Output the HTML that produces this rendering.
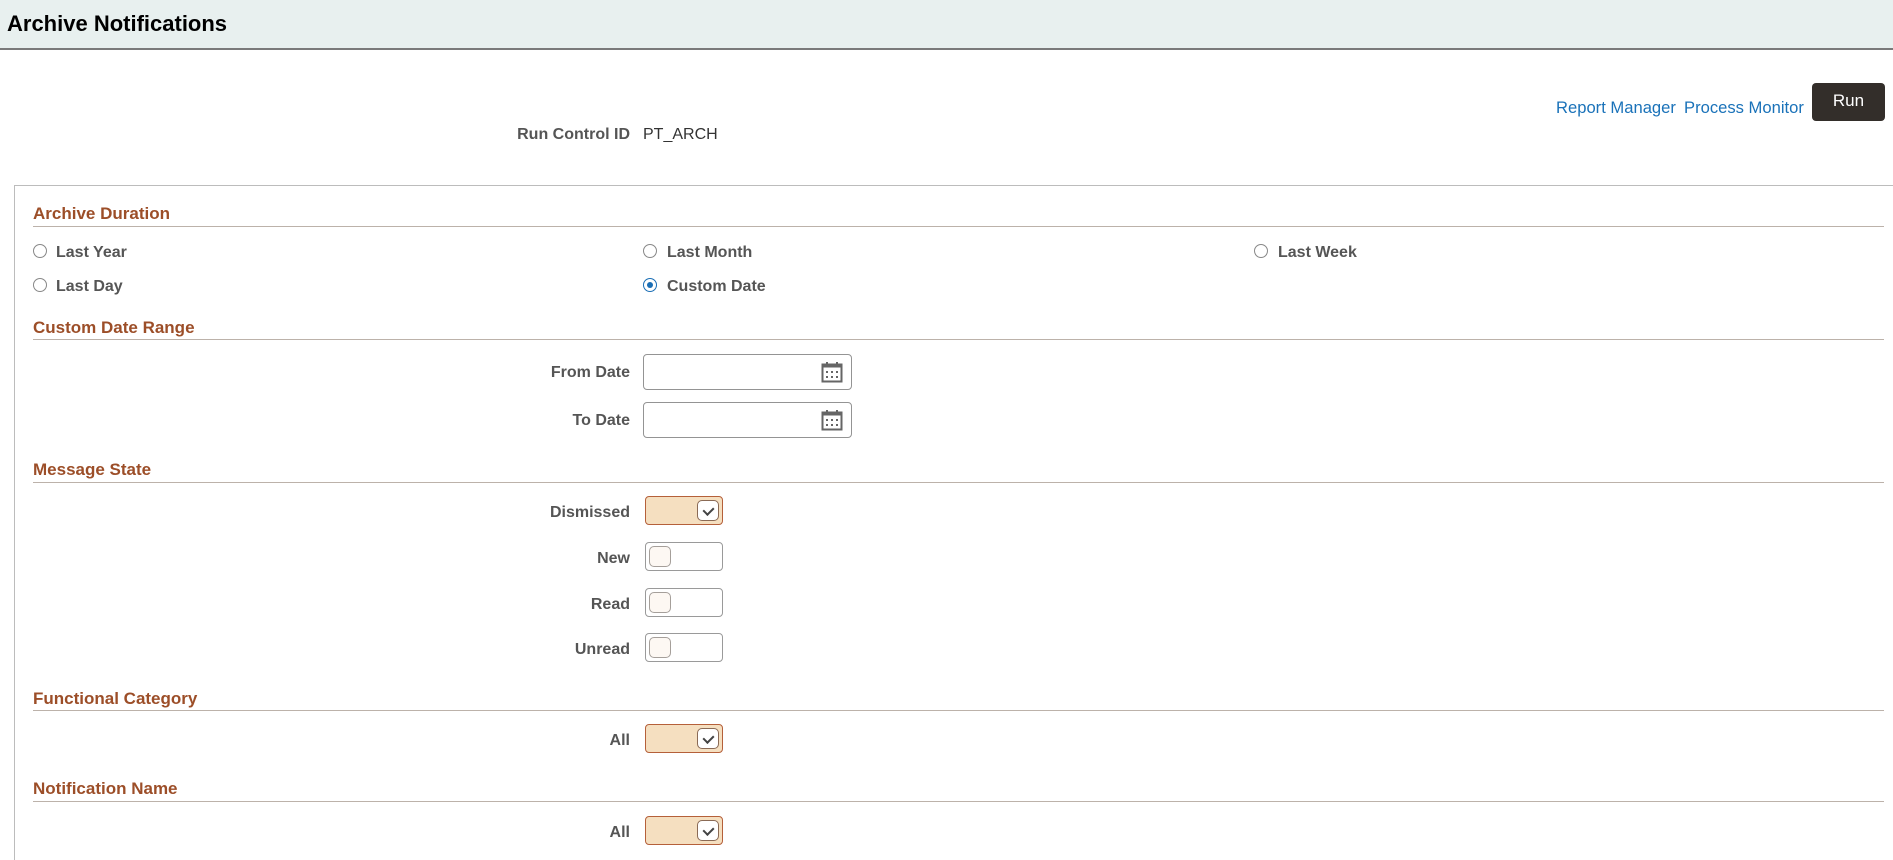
<!DOCTYPE html>
<html style="width:1893px;height:860px;overflow:hidden"><head><meta charset="utf-8"><style>
*{box-sizing:border-box;margin:0;padding:0}
body{width:1893px;height:860px;background:#fff;font-family:"Liberation Sans",Arial,sans-serif;position:relative;overflow:hidden;color:#333}
.hdr{position:absolute;left:0;top:0;width:1893px;height:50px;background:#e8f0ef;border-bottom:2px solid #7a7a7a}
.hdr h1{position:absolute;left:7px;top:11px;font-size:22px;font-weight:bold;color:#000}
.a{position:absolute;font-size:16.6px;color:#1a72b9;top:98px}
.run{position:absolute;left:1812px;top:83px;width:73px;height:38px;background:#332e2a;border-radius:4px;color:#fff;font-size:17px;text-align:center;line-height:36px}
.abs{position:absolute}
.lbl{position:absolute;font-size:16px;font-weight:bold;color:#555;text-align:right;width:300px;margin-top:1.5px}
.box{position:absolute;left:14px;top:185px;width:1900px;height:700px;border:1px solid #bcbcbc}
.h{position:absolute;left:33px;font-size:17px;font-weight:bold;color:#9c4e28;margin-top:1.5px}
.ln{position:absolute;left:33px;width:1851px;height:1px;background:#bcb2aa}
.rd{position:absolute;width:14px;height:14px;border:1.5px solid #888;border-radius:50%;background:#fff}
.rd.on{border-color:#1a6eb5}
.rd.on:after{content:"";position:absolute;left:2.5px;top:2.5px;width:6px;height:6px;border-radius:50%;background:#1a6eb5}
.rl{position:absolute;font-size:16px;font-weight:bold;color:#555;margin-top:1.5px}
.inp{position:absolute;left:643px;width:209px;height:36px;border:1px solid #949494;border-radius:4px;background:#fff}
.inp svg{position:absolute;right:8px;top:6px}
.tg{position:absolute;left:645px;width:78px;height:29px;border:1px solid #9a9a9a;border-radius:4px;background:#fff}
.tg .k{position:absolute;left:3px;top:3px;width:22px;height:21px;border:1px solid #a59f9a;border-radius:5px;background:#fdf8f3}
.tg.on{background:#f5dfc0;border-color:#b5603a}
.tg.on .k{left:auto;right:3px;background:#fff;border-color:#8a6a55}
.tg.on .k:after{content:"";position:absolute;left:7px;top:4px;width:5px;height:8px;border:solid #444;border-width:0 2px 2px 0;transform:rotate(45deg)}
</style></head><body>
<div class="hdr"><h1>Archive Notifications</h1></div>
<div class="a" style="left:1556px">Report Manager</div>
<div class="a" style="left:1684px">Process Monitor</div>
<div class="run">Run</div>
<div class="lbl" style="left:330px;top:124px">Run Control ID</div>
<div class="abs" style="left:643px;top:125.5px;font-size:16px;color:#333">PT_ARCH</div>
<div class="box"></div>

<div class="h" style="top:202px">Archive Duration</div><div class="ln" style="top:226px"></div>
<div class="rd" style="left:33px;top:244px"></div><div class="rl" style="left:56px;top:242px">Last Year</div>
<div class="rd" style="left:643px;top:244px"></div><div class="rl" style="left:667px;top:242px">Last Month</div>
<div class="rd" style="left:1254px;top:244px"></div><div class="rl" style="left:1278px;top:242px">Last Week</div>
<div class="rd" style="left:33px;top:278px"></div><div class="rl" style="left:56px;top:276px">Last Day</div>
<div class="rd on" style="left:643px;top:278px"></div><div class="rl" style="left:667px;top:276px">Custom Date</div>

<div class="h" style="top:316px">Custom Date Range</div><div class="ln" style="top:339px"></div>
<div class="lbl" style="left:330px;top:362px">From Date</div>
<div class="inp" style="top:354px"><svg width="22" height="22" viewBox="0 0 22 22"><rect x="1.5" y="3.5" width="19" height="17" fill="none" stroke="#666" stroke-width="2"/><rect x="1.5" y="3.5" width="19" height="3" fill="#666"/><path d="M6 1v4M16 1v4" stroke="#666" stroke-width="2"/><g fill="#666"><rect x="5" y="10" width="2" height="2"/><rect x="10" y="10" width="2" height="2"/><rect x="15" y="10" width="2" height="2"/><rect x="5" y="15" width="2" height="2"/><rect x="10" y="15" width="2" height="2"/><rect x="15" y="15" width="2" height="2"/></g></svg></div>
<div class="lbl" style="left:330px;top:410px">To Date</div>
<div class="inp" style="top:402px"><svg width="22" height="22" viewBox="0 0 22 22"><rect x="1.5" y="3.5" width="19" height="17" fill="none" stroke="#666" stroke-width="2"/><rect x="1.5" y="3.5" width="19" height="3" fill="#666"/><path d="M6 1v4M16 1v4" stroke="#666" stroke-width="2"/><g fill="#666"><rect x="5" y="10" width="2" height="2"/><rect x="10" y="10" width="2" height="2"/><rect x="15" y="10" width="2" height="2"/><rect x="5" y="15" width="2" height="2"/><rect x="10" y="15" width="2" height="2"/><rect x="15" y="15" width="2" height="2"/></g></svg></div>

<div class="h" style="top:458px">Message State</div><div class="ln" style="top:482px"></div>
<div class="lbl" style="left:330px;top:502px">Dismissed</div><div class="tg on" style="top:496px"><div class="k"></div></div>
<div class="lbl" style="left:330px;top:548px">New</div><div class="tg" style="top:542px"><div class="k"></div></div>
<div class="lbl" style="left:330px;top:594px">Read</div><div class="tg" style="top:588px"><div class="k"></div></div>
<div class="lbl" style="left:330px;top:639px">Unread</div><div class="tg" style="top:633px"><div class="k"></div></div>

<div class="h" style="top:687px">Functional Category</div><div class="ln" style="top:710px"></div>
<div class="lbl" style="left:330px;top:730px">All</div><div class="tg on" style="top:724px"><div class="k"></div></div>

<div class="h" style="top:777px">Notification Name</div><div class="ln" style="top:801px"></div>
<div class="lbl" style="left:330px;top:822px">All</div><div class="tg on" style="top:816px"><div class="k"></div></div>
</body></html>
